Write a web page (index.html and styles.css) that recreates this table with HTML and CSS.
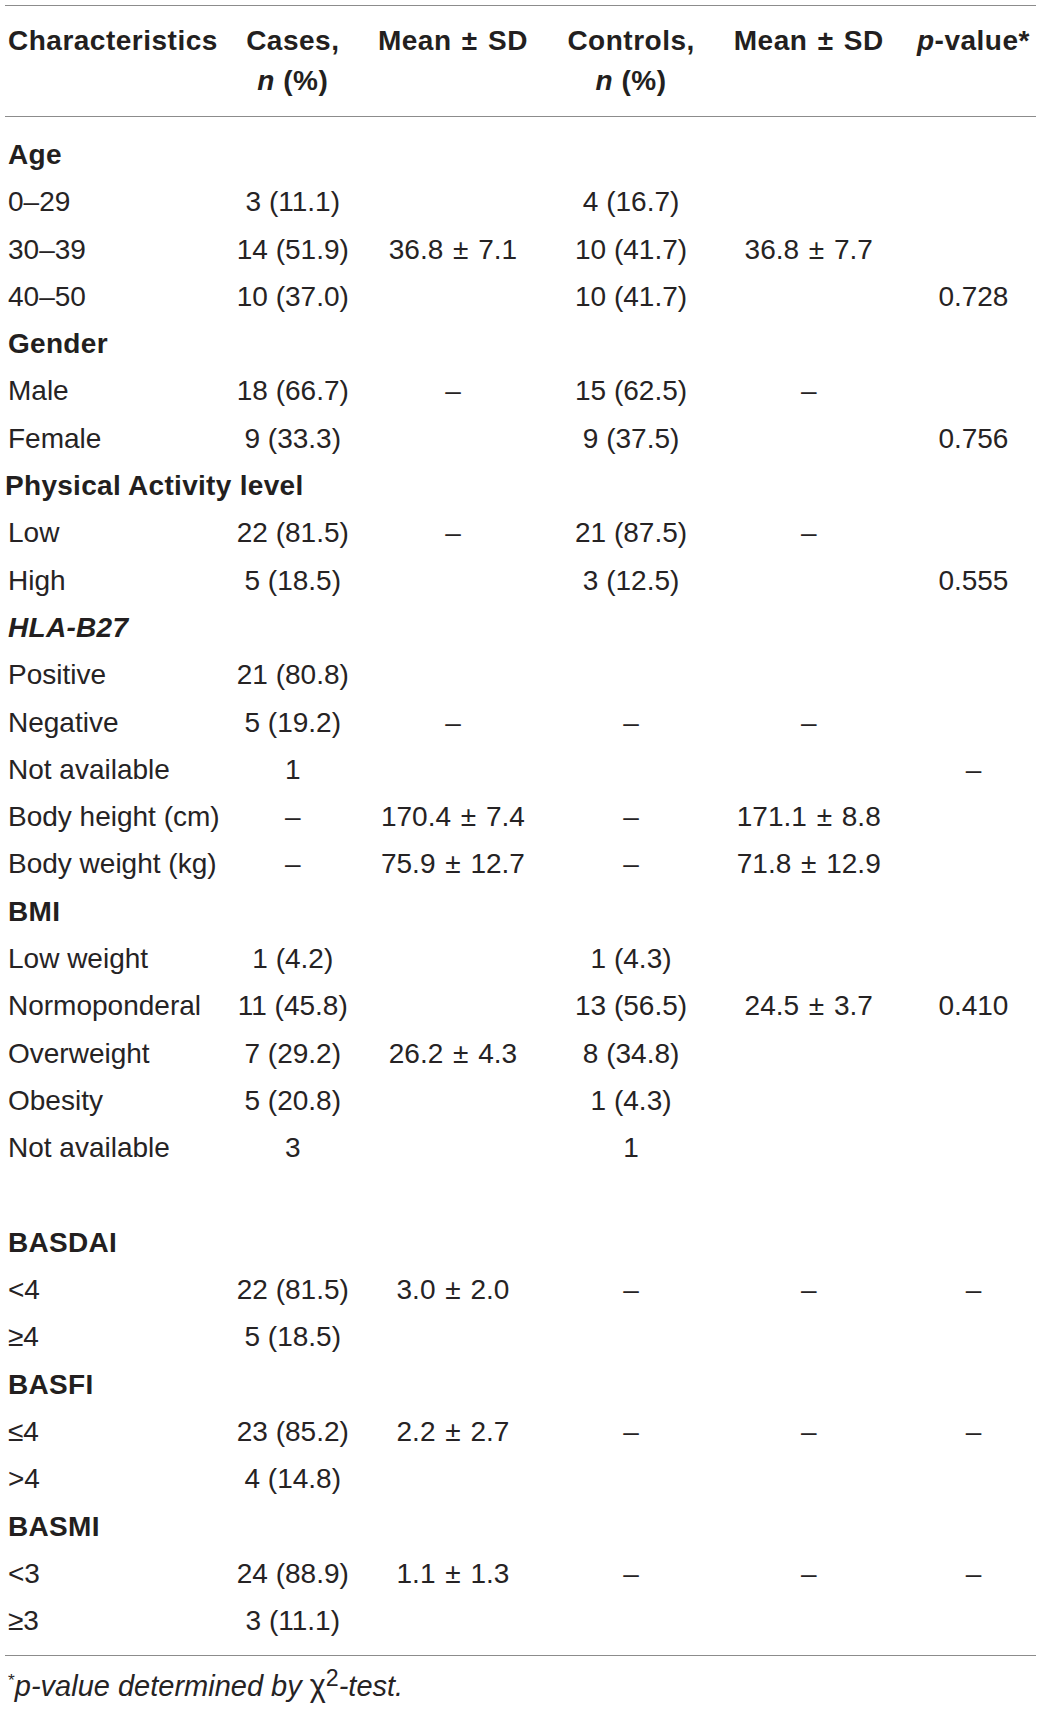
FILE: index.html
```
<!DOCTYPE html>
<html>
  <head>
    <meta charset="utf-8">
    <title>Table 1 - Characteristics</title>
    <link rel="stylesheet" href="styles.css">
  </head>
  <body>
    <div class="page">
      <table class="demo">
        <colgroup>
          <col class="c-lbl">
          <col class="c-cases">
          <col class="c-mean">
          <col class="c-ctrl">
          <col class="c-mean2">
          <col class="c-p">
        </colgroup>
        <thead>
          <tr>
            <th class="lbl">Characteristics</th>
            <th>Cases,<br><i>n</i> (%)</th>
            <th>Mean <span class="pm">±</span> SD</th>
            <th>Controls,<br><i>n</i> (%)</th>
            <th>Mean <span class="pm">±</span> SD</th>
            <th><i>p</i>-value*</th>
          </tr>
        </thead>
        <tbody>
          <tr class="first"><td class="lbl sec" colspan="6">Age</td></tr>
          <tr><td class="lbl">0–29</td><td>3 (11.1)</td><td></td><td>4 (16.7)</td><td></td><td></td></tr>
          <tr><td class="lbl">30–39</td><td>14 (51.9)</td><td>36.8 <span class="pm">±</span> 7.1</td><td>10 (41.7)</td><td>36.8 <span class="pm">±</span> 7.7</td><td></td></tr>
          <tr><td class="lbl">40–50</td><td>10 (37.0)</td><td></td><td>10 (41.7)</td><td></td><td>0.728</td></tr>
          <tr><td class="lbl sec" colspan="6">Gender</td></tr>
          <tr><td class="lbl">Male</td><td>18 (66.7)</td><td>–</td><td>15 (62.5)</td><td>–</td><td></td></tr>
          <tr><td class="lbl">Female</td><td>9 (33.3)</td><td></td><td>9 (37.5)</td><td></td><td>0.756</td></tr>
          <tr><td class="lbl sec tight" colspan="6">Physical Activity level</td></tr>
          <tr><td class="lbl">Low</td><td>22 (81.5)</td><td>–</td><td>21 (87.5)</td><td>–</td><td></td></tr>
          <tr><td class="lbl">High</td><td>5 (18.5)</td><td></td><td>3 (12.5)</td><td></td><td>0.555</td></tr>
          <tr><td class="lbl sec" colspan="6"><i>HLA-B27</i></td></tr>
          <tr><td class="lbl">Positive</td><td>21 (80.8)</td><td></td><td></td><td></td><td></td></tr>
          <tr><td class="lbl">Negative</td><td>5 (19.2)</td><td>–</td><td>–</td><td>–</td><td></td></tr>
          <tr><td class="lbl">Not available</td><td>1</td><td></td><td></td><td></td><td>–</td></tr>
          <tr><td class="lbl">Body height (cm)</td><td>–</td><td>170.4 <span class="pm">±</span> 7.4</td><td>–</td><td>171.1 <span class="pm">±</span> 8.8</td><td></td></tr>
          <tr><td class="lbl">Body weight (kg)</td><td>–</td><td>75.9 <span class="pm">±</span> 12.7</td><td>–</td><td>71.8 <span class="pm">±</span> 12.9</td><td></td></tr>
          <tr><td class="lbl sec" colspan="6">BMI</td></tr>
          <tr><td class="lbl">Low weight</td><td>1 (4.2)</td><td></td><td>1 (4.3)</td><td></td><td></td></tr>
          <tr><td class="lbl">Normoponderal</td><td>11 (45.8)</td><td></td><td>13 (56.5)</td><td>24.5 <span class="pm">±</span> 3.7</td><td>0.410</td></tr>
          <tr><td class="lbl">Overweight</td><td>7 (29.2)</td><td>26.2 <span class="pm">±</span> 4.3</td><td>8 (34.8)</td><td></td><td></td></tr>
          <tr><td class="lbl">Obesity</td><td>5 (20.8)</td><td></td><td>1 (4.3)</td><td></td><td></td></tr>
          <tr><td class="lbl">Not available</td><td>3</td><td></td><td>1</td><td></td><td></td></tr>
          <tr><td class="lbl" colspan="6">&nbsp;</td></tr>
          <tr><td class="lbl sec" colspan="6">BASDAI</td></tr>
          <tr><td class="lbl">&lt;4</td><td>22 (81.5)</td><td>3.0 <span class="pm">±</span> 2.0</td><td>–</td><td>–</td><td>–</td></tr>
          <tr><td class="lbl">≥4</td><td>5 (18.5)</td><td></td><td></td><td></td><td></td></tr>
          <tr><td class="lbl sec" colspan="6">BASFI</td></tr>
          <tr><td class="lbl">≤4</td><td>23 (85.2)</td><td>2.2 <span class="pm">±</span> 2.7</td><td>–</td><td>–</td><td>–</td></tr>
          <tr><td class="lbl">&gt;4</td><td>4 (14.8)</td><td></td><td></td><td></td><td></td></tr>
          <tr><td class="lbl sec" colspan="6">BASMI</td></tr>
          <tr><td class="lbl">&lt;3</td><td>24 (88.9)</td><td>1.1 <span class="pm">±</span> 1.3</td><td>–</td><td>–</td><td>–</td></tr>
          <tr class="last"><td class="lbl">≥3</td><td>3 (11.1)</td><td></td><td></td><td></td><td></td></tr>
        </tbody>
      </table>
      <p class="note"><sup class="star">*</sup><i>p-value determined by</i> <span class="chi">χ</span><sup>2</sup><i>-test.</i></p>
    </div>
  </body>
</html>
```

FILE: styles.css
```
body{margin:0;background:#fff;color:#262324;font-family:"Liberation Sans",Arial,sans-serif;font-size:28px}
.page{padding:5px 5px 0 5px}
.demo{width:100%;border-collapse:collapse;table-layout:fixed;border-top:1px solid #8c8c8c;border-bottom:1px solid #8c8c8c}
.c-lbl{width:230px}
.c-cases{width:115px}
.c-mean{width:205px}
.c-ctrl{width:151px}
.c-mean2{width:204px}
.c-p{width:125px}
.demo th{font-weight:bold;line-height:40px;letter-spacing:0.5px;vertical-align:top;text-align:center;padding:15px 0 15px 0;border-bottom:1px solid #8c8c8c;white-space:nowrap;color:#231f20}
.demo td{line-height:47.3px;height:47.3px;padding:0;text-align:center;white-space:nowrap}
.demo .lbl{text-align:left;padding-left:3px}
.demo .sec{font-weight:bold;letter-spacing:0.3px;color:#231f20}
.demo .tight{padding-left:0}
.demo tr.first td{padding-top:14px}
.demo tr.last td{padding-bottom:10px}
.pm{padding:0 2px}
.note{margin:11px 0 0 3px;line-height:36px;font-size:29px}
.note i{font-style:italic}
.note sup{font-size:0.8em;line-height:0;vertical-align:0.45em}
.note .star{font-size:0.6em;vertical-align:0.6em}
.chi{font-size:1.05em}
```
